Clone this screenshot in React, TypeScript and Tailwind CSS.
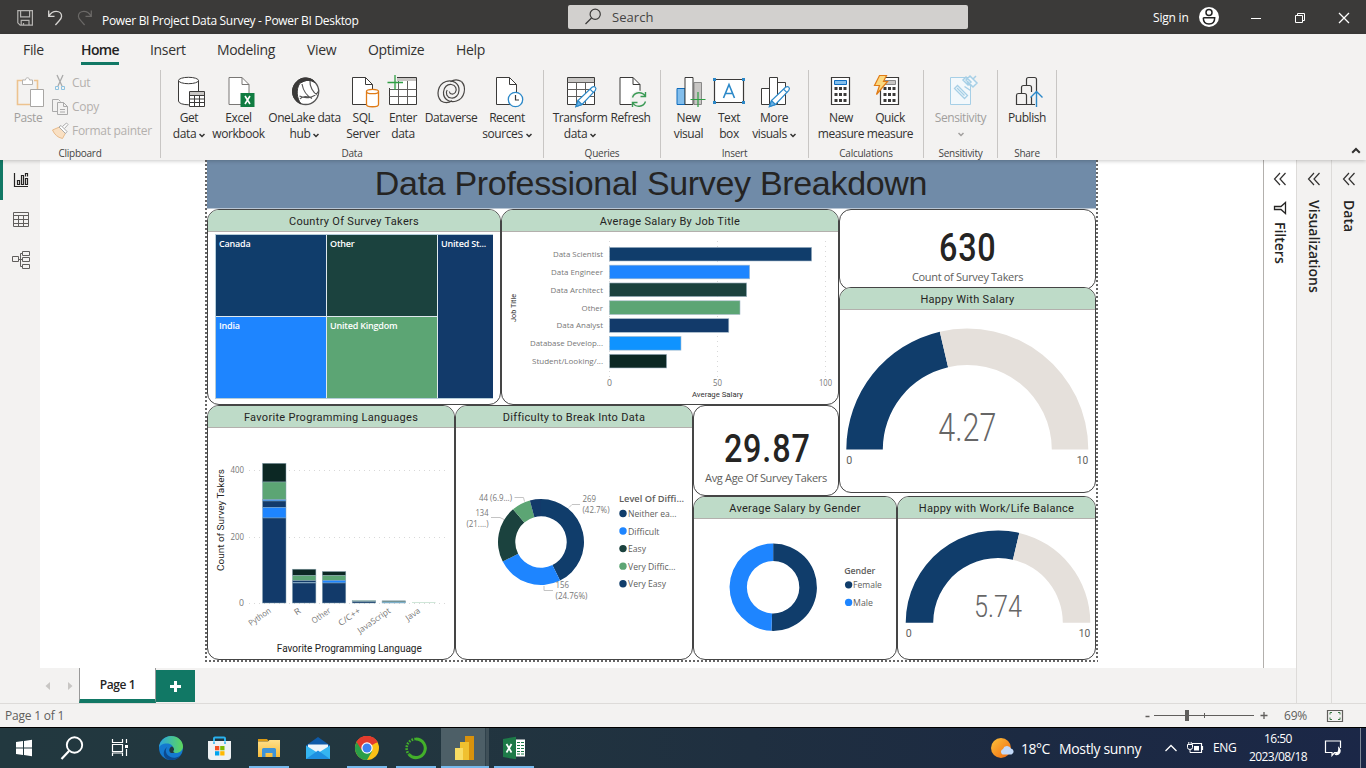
import React from "react";

const SANS = "font-['Open_Sans','Noto_Sans',sans-serif]";
const NAVY = "#103d6b";
const BLUE = "#1e85ff";
const PINE = "#1b423e";
const GREEN = "#5ca574";
const DARK = "#0c2824";

/* ---------- shared helpers ---------- */

type LabelProps = {
  x: number;
  y: number;
  size: number;
  len?: number;
  anchor?: "start" | "middle" | "end";
  fill?: string;
  weight?: number;
  family?: string;
  transform?: string;
  children: string;
};

function Label({ x, y, size, len, anchor = "start", fill = "#777", weight = 400, family = "Open Sans, Noto Sans, sans-serif", transform, children }: LabelProps) {
  return (
    <text x={x} y={y} fontSize={size} textLength={len} lengthAdjust="spacingAndGlyphs" textAnchor={anchor} fill={fill} fontWeight={weight} fontFamily={family} transform={transform}>
      {children}
    </text>
  );
}

function ring(cx: number, cy: number, R: number, r: number, from: number, to: number) {
  const p = (rad: number, deg: number) => {
    const a = ((deg - 90) * Math.PI) / 180;
    return `${(cx + rad * Math.cos(a)).toFixed(2)} ${(cy + rad * Math.sin(a)).toFixed(2)}`;
  };
  const big = to - from > 180 ? 1 : 0;
  return `M${p(R, from)}A${R} ${R} 0 ${big} 1 ${p(R, to)}L${p(r, to)}A${r} ${r} 0 ${big} 0 ${p(r, from)}Z`;
}

function Chevron({ className = "" }: { className?: string }) {
  return (
    <svg className={`inline-block ${className}`} width="6" height="5" viewBox="0 0 6 5" fill="none" stroke="currentColor" strokeWidth="1.5">
      <path d="M.5 1 3 3.5 5.5 1" />
    </svg>
  );
}

/* ---------- title bar ---------- */

function TitleBar() {
  return (
    <header className="flex h-[34px] shrink-0 items-center bg-[#3b3a39] text-white">
      <svg width="102" height="34" viewBox="0 0 102 34" fill="none">
        <g stroke="#b5b3b1" strokeWidth="1.2">
          <path d="M17.8 10.6h14.6v14.6H20.2l-2.4-2.4z" />
          <path d="M20.6 10.6v6.2h9v-6.2M21.2 25v-4.6h7.8V25M23.5 23v2" />
        </g>
        <path d="M48.7 10.5v5.8h5.8M49 16c2-3.6 4.600-4.700 7.200-4.700 3.300 0 5.400 2.300 5.400 5 0 1.900-1 3-2.400 4.400L55.400 25" stroke="#d6d4d2" strokeWidth="1.3" />
        <path d="M91.300 10.500v5.800h-5.800M91 16c-2-3.600-4.600-4.700-7.200-4.700-3.300 0-5.400 2.300-5.400 5 0 1.900 1 3 2.400 4.400l3.800 4.300" stroke="#6b6967" strokeWidth="1.2" />
      </svg>
      <span className="w-[466px] pt-[7px] text-[12px] leading-4 tracking-[-0.31px]">Power BI Project Data Survey - Power BI Desktop</span>
      <div className="flex h-6 w-[400px] items-center rounded-[2px] bg-[#d2d0ce] text-[#444]">
        <svg className="ml-4" width="18" height="18" viewBox="0 0 18 18" fill="none" stroke="#3b3a39" strokeWidth="1.2">
          <circle cx="11.200" cy="6.300" r="5.100" />
          <path d="M7.500 10 1.500 16" />
        </svg>
        <span className="ml-[10px] pt-px text-[13px] tracking-[0.05px]">Search</span>
      </div>
      <span className="ml-[185px] pt-px text-[12px] tracking-[-0.2px]">Sign in</span>
      <svg className="ml-auto" width="167" height="34" viewBox="1199 0 167 34" fill="none">
        <circle cx="1209" cy="17" r="10" fill="#fff" />
        <circle cx="1209" cy="12.600" r="3" stroke="#222" strokeWidth="1.500" />
        <path d="M1203.300 17.700h11.400c0 4-2.300 6.300-5.700 6.300s-5.700-2.300-5.700-6.300z" stroke="#222" strokeWidth="1.500" />
        <path d="M1251 18.500h10" stroke="#fff" />
        <path d="M1295.500 15.500h7v7h-7zM1297.500 15.500v-2h7v7h-2" stroke="#fff" />
        <path d="m1339 13 10 10m0-10-10 10" stroke="#fff" strokeWidth="1.300" />
      </svg>
    </header>
  );
}

/* ---------- ribbon ---------- */

function Tabs() {
  return (
    <nav className="flex h-8 pl-[23px] pt-[5px] text-[14px] leading-[22px] tracking-[-0.33px] text-[#323130]">
      <span className="w-[58px]">File</span>
      <span className="w-[69px]">
        <span className="block h-[26px] w-[38px] border-b-[3px] border-[#117865] font-semibold tracking-[-0.6px] text-[#222]">Home</span>
      </span>
      <span className="w-[67px]">Insert</span>
      <span className="w-[90px]">Modeling</span>
      <span className="w-[61px]">View</span>
      <span className="w-[88px]">Optimize</span>
      <span>Help</span>
    </nav>
  );
}

type ToolProps = { width: string; cx: number; lines: [string, string?]; menu?: boolean; muted?: boolean; children: React.ReactNode };

function Tool({ width, cx, lines, menu, muted, children }: ToolProps) {
  return (
    <div className={`flex shrink-0 flex-col items-center whitespace-nowrap text-[12px] leading-4 tracking-[-0.42px] ${width} ${muted ? "text-[#a19f9d]" : "text-[#323130]"}`}>
      <svg width="44" height="36" viewBox={`${cx - 22} 74 44 36`} fill="none" stroke="#3b3a39" strokeWidth="1">
        {children}
      </svg>
      <span>{lines[0]}</span>
      <span className="flex h-4 items-center">
        {lines[1]}
        {menu && <Chevron className={lines[1] ? "ml-[3px] mt-[2px]" : ""} />}
      </span>
    </div>
  );
}

function Group({ width, pad, name, children }: { width: string; pad: string; name: string; children: React.ReactNode }) {
  return (
    <section className={`flex h-[88px] shrink-0 flex-col border-r border-[#c8c6c4] ${width}`}>
      <div className={`flex h-[76px] shrink-0 pt-1 ${pad}`}>{children}</div>
      <div className="shrink-0 text-center text-[10px] leading-[15px] tracking-[-0.25px] text-[#444]">{name}</div>
    </section>
  );
}

function Page({ x, stroke = "#3b3a39" }: { x: number; stroke?: string }) {
  return (
    <g stroke={stroke}>
      <path d={`M${x} 77.500h13l7 7v20h-20z`} fill="#fff" />
      <path d={`M${x + 13} 77.500v7h7`} />
    </g>
  );
}

function Pencil({ x, y }: { x: number; y: number }) {
  return (
    <g transform={`translate(${x} ${y})`} stroke="#2b88c8" strokeWidth="1.200">
      <path d="m0 20 2-6L16 .8c2.500-2 5 .6 3.300 3L6 18z" fill="#fff" />
      <path d="m0 20 2-6 4 4z" fill="#6ab2e6" />
      <path d="m14 2.700 3.500 3.500" />
    </g>
  );
}

function Ribbon() {
  return (
    <div className="relative z-10 h-[126px] shrink-0 bg-[#f3f2f1] shadow-[0_1px_4px_rgba(0,0,0,.22)]">
      <Tabs />
      <div className="flex pt-1">
        <Group width="w-[161px]" pad="pl-[14px]" name="Clipboard">
          <Tool width="w-[28px]" cx={28} lines={["Paste"]} muted>
            <path d="M24 80.500h-6.500v24H30M34 80.500h3.500V89" stroke="#edc38f" strokeWidth="1.600" />
            <path d="M22.500 84.500V80h3c0-3 4-3 4 0h3v4.500z" fill="#fff" stroke="#b5b3b1" />
            <path d="M30.500 89.500h13v17h-13z" fill="#fff" stroke="#a8a6a4" />
          </Tool>
          <div className="-mt-[3px] ml-[9px] flex flex-col text-[12px] leading-6 tracking-[-0.29px] text-[#b3b0ad]">
            <div className="flex h-6 items-center">
              <svg width="18" height="18" viewBox="51 74 18 18" fill="none" stroke="#aaa">
                <path d="m57 75 5 11m1-11-5 11" strokeWidth="1.300" />
                <path d="M55.500 86.500h3v3h-3zM61.500 86.500h3v3h-3z" stroke="#8fc3e0" />
              </svg>
              <span className="ml-[3px]">Cut</span>
            </div>
            <div className="flex h-6 items-center">
              <svg width="18" height="18" viewBox="51 97 18 18" fill="none" stroke="#aaa">
                <path d="M57 110.500h-4.500v-12h6l2 2" />
                <path d="M57.500 101.500h6l4 4v8h-10zM63.500 101.500v4h4M60 108.500h5M60 111h5" />
              </svg>
              <span className="ml-[3px]">Copy</span>
            </div>
            <div className="flex h-6 items-center">
              <svg width="18" height="18" viewBox="51 121 18 18" fill="none" stroke="#aaa">
                <path d="m52.500 129 7-3 6 6-3 5.500c-5-1-8-4-10-8.500z" fill="#f9e0c3" stroke="#e8bb8b" />
                <path d="m59 126 2-1.500 6 6-1.500 2zM62.500 125.500l4-3.500 1.500 1.500-3.500 4" fill="#fff" />
              </svg>
              <span className="ml-[3px]">Format painter</span>
            </div>
          </div>
        </Group>

        <Group width="w-[383px]" pad="pl-[4px]" name="Data">
          <Tool width="w-[48px]" cx={189} lines={["Get", "data"]} menu>
            <path d="M178.500 80.500v20.500c0 5 20 5 20 0V80.500" fill="#fff" />
            <ellipse cx="188.500" cy="80.500" rx="10" ry="3.200" fill="#fff" />
            <path d="M189.500 91.500h15v15h-15z" fill="#fff" />
            <path d="M190 92h14v3h-14z" fill="#c8c6c4" stroke="none" />
            <path d="M189.500 95.500h15M189.500 99h15M189.500 102.500h15M194.500 95.500v11M199.500 95.500v11" />
          </Tool>
          <Tool width="w-[51px]" cx={238.5} lines={["Excel", "workbook"]}>
            <Page x={228.5} stroke="#797775" />
            <path d="M240 93h14v14h-14z" fill="#107c41" stroke="none" />
            <path d="m244.500 96 5 8m0-8-5 8" stroke="#fff" strokeWidth="1.600" />
          </Tool>
          <Tool width="w-[81px]" cx={304.5} lines={["OneLake data", "hub"]} menu>
            <circle cx="305.200" cy="91.500" r="13" fill="#fff" stroke="#555" strokeWidth="1.300" />
            <path d="M296 82c-5 5-5.500 13-.5 18.500 1.500 1.500 3.500 2.800 5 3.300-4.500-5.500-5-14.500-1.500-20 3.500-3.500 10.500-5 15.500-1-5-6.500-13.500-6.500-18.500-.8z" fill="#3b3a39" strokeWidth="1" />
            <path d="M301 82.500c3-4 8.500-5.500 12.500-1.500-4.500-1.500-9-.8-12.500 1.500z" fill="#3b3a39" />
            <path d="M301.500 84c1 6 5 12 10 14.500M309.500 81c-.5 5 3 12 8 14.500M299 96c4 2 14 4 19.500-5.500M299.500 99c2-2.500 6-3 9-1.500" stroke="#555" strokeWidth="1.200" />
          </Tool>
          <Tool width="w-[36px]" cx={363} lines={["SQL", "Server"]}>
            <Page x={352.5} />
            <path d="M366.500 91.500v13c0 3 12 3 12 0v-13" fill="#fff" stroke="#e07b16" strokeWidth="1.300" />
            <ellipse cx="372.500" cy="91.500" rx="6" ry="2.200" fill="#fff" stroke="#e07b16" strokeWidth="1.300" />
          </Tool>
          <Tool width="w-[44px]" cx={403} lines={["Enter", "data"]}>
            <path d="M389.500 77.500h27v27h-27z" fill="#fff" />
            <path d="M390 78h26v3h-26z" fill="#c8c6c4" stroke="none" />
            <path d="M389.500 89.500h27M389.500 96.500h27M398.500 81v23M407.500 81v23" stroke="#605e5c" />
            <path d="M386 75h11v13h-11z" fill="#f3f2f1" stroke="none" />
            <path d="M395 75v15M387.500 82.500h15.500" stroke="#2f9e44" strokeWidth="1.300" />
          </Tool>
          <Tool width="w-[52px]" cx={451} lines={["Dataverse"]}>
            <g stroke="#484644" strokeWidth="1.200">
              <path d="M461.500 81.500c5.500 6 3 17-5 19.500-7 2.300-13.500-2-13-9 .3-5 3.800-8 7.800-7.500 4.300.5 6.200 5 4 8-1.800 2.400-5.500 2-6-1" />
              <path d="M441 101c-5.500-6-3-17 5-19.500 7-2.300 13.500 2 13 9-.3 5-3.800 8-7.800 7.500-4.300-.5-6.200-5-4-8" />
              <path d="M461.500 81.500c-3.500-2-8-1.800-11 .3M441 101c3.500 2 8 1.800 11-.3" />
            </g>
          </Tool>
          <Tool width="w-[60px]" cx={507} lines={["Recent", "sources"]} menu>
            <Page x={496.5} />
            <circle cx="515.500" cy="99.500" r="7.200" fill="#fff" stroke="#2b88c8" strokeWidth="1.300" />
            <path d="M515.500 95v5h3.500" strokeWidth="1.200" />
          </Tool>
        </Group>

        <Group width="w-[117px]" pad="pl-[9px]" name="Queries">
          <Tool width="w-[54px]" cx={580} lines={["Transform", "data"]} menu>
            <path d="M567.500 77.500h27v27h-27z" fill="#fff" />
            <path d="M568 78h26v4h-26z" fill="#c8c6c4" stroke="none" />
            <path d="M567.500 82.500h27M567.500 89.500h27M567.500 96.500h27M576.500 82v22M585.500 82v22" stroke="#605e5c" />
            <Pencil x={576} y={86.5} />
          </Tool>
          <Tool width="w-[47px]" cx={630.5} lines={["Refresh"]}>
            <Page x={619.5} />
            <circle cx="638.500" cy="99.500" r="9" fill="#f3f2f1" stroke="none" />
            <path d="M632 97.500c2-6 10-6 12.500-1.500M645 92v4.500h-5M645 101.500c-2 6-10 6-12.500 1.500M632 107v-4.500h5" stroke="#3a9a55" strokeWidth="1.400" />
          </Tool>
        </Group>

        <Group width="w-[148px]" pad="pl-[8px]" name="Insert">
          <Tool width="w-[39px]" cx={688.5} lines={["New", "visual"]}>
            <path d="M693.500 82.500h7.500v22h-7.500z" fill="#c8c6c4" stroke="#888" />
            <path d="M676.500 88.500h8v16h-8z" fill="#83beec" stroke="#0f6cbd" />
            <path d="M684.500 77.500h8v27h-8z" fill="#fff" />
            <path d="M697.500 92v15M690 99.500h15" stroke="#2f9e44" strokeWidth="1.200" />
          </Tool>
          <Tool width="w-[42px]" cx={729} lines={["Text", "box"]}>
            <path d="M714.500 79.500h29v23h-29z" fill="#fff" strokeWidth="1.200" />
            <path d="m723.500 98 5.500-13.500L734.500 98M725.300 93.500h7.400" stroke="#2b88c8" strokeWidth="1.600" />
            <path d="M713 78h3v3h-3zM742 78h3v3h-3zM713 101h3v3h-3zM742 101h3v3h-3z" fill="#2b88c8" stroke="none" />
          </Tool>
          <Tool width="w-[48px]" cx={774} lines={["More", "visuals"]} menu>
            <path d="M761.500 88.500h8v16h-8zM777.500 82.500h8v22h-8zM769.500 77.500h8v27h-8z" fill="#fff" />
            <Pencil x={769.5} y={86.5} />
          </Tool>
        </Group>

        <Group width="w-[115px]" pad="pl-[7px]" name="Calculations">
          <Tool width="w-[50px]" cx={841} lines={["New", "measure"]}>
            <path d="M831.500 77.500h18v27h-18z" fill="#fff" strokeWidth="1.200" />
            <path d="M834.500 80.500h12v4h-12z" fill="#83beec" stroke="#0f6cbd" />
            <path d="M834.500 88.500h12M834.500 94.500h12M834.500 100.500h12" strokeWidth="3" strokeDasharray="3 1.500" />
          </Tool>
          <Tool width="w-[48px]" cx={890} lines={["Quick", "measure"]}>
            <path d="M880.500 77.500h18v27h-18z" fill="#fff" strokeWidth="1.200" />
            <path d="M883.500 80.500h12v4h-12z" fill="#c8c6c4" stroke="#888" />
            <path d="M883.500 88.500h12M883.500 94.500h12M883.500 100.500h12" strokeWidth="3" strokeDasharray="3 1.500" />
            <path d="M879.500 75.500h7l-3 6h4l-11 13 3-9h-5z" fill="#fbd87f" stroke="#e07b16" strokeWidth="1.200" />
          </Tool>
        </Group>

        <Group width="w-[74px]" pad="pl-[6px]" name="Sensitivity">
          <Tool width="w-[61px]" cx={960} lines={["Sensitivity"]} menu muted>
            <g stroke="#a6cfe6">
              <path d="M949.500 77.500h20v27h-20z" fill="#f3f8fb" />
              <path d="m953.500 88.500 3-3 10 10-3 3zM956 88l7.500 7.500" strokeWidth="1.300" />
              <path d="m962 80 3-3 5 5-3 3zM969 76l7 7-4 4-7-7zM966 82l4 4M963.500 86.500l6 4M972 79l3-3" fill="#f3f8fb" strokeWidth="1.500" />
            </g>
          </Tool>
        </Group>

        <Group width="w-[59px]" pad="pl-[7px]" name="Share">
          <Tool width="w-[44px]" cx={1027} lines={["Publish"]}>
            <path d="M1026.500 85.500v-6q0-2 2-2h6q2 0 2 2v12M1021.500 93v-5.500q0-2 2-2h6q2 0 2 2V92M1031.500 97v7.500h3.500" strokeWidth="1.200" />
            <path d="M1016.500 104.500v-9q0-2 2-2h6q2 0 2 2v9zM1026.500 104.500h5" strokeWidth="1.200" />
            <path d="M1036.500 107V91.500m-6 6 6-6 6 6" stroke="#2b88c8" strokeWidth="1.400" />
          </Tool>
        </Group>

        <svg className="ml-auto mr-[5px] mt-[76px]" width="10" height="9" viewBox="0 0 10 9" fill="none" stroke="#323130" strokeWidth="2">
          <path d="m1.200 6.800 3.800-3.800 3.800 3.800" />
        </svg>
      </div>
    </div>
  );
}

/* ---------- report ---------- */

function Card({ place, title, children }: { place: string; title?: string; children: React.ReactNode }) {
  return (
    <article className={`flex flex-col overflow-hidden rounded-[12px] border border-[#454545] bg-white ${place}`}>
      {title && (
        <h2 className="h-[22px] shrink-0 border-b border-[#b3b0ad] bg-[#bedbc8] text-center font-[Roboto,sans-serif] text-[11px] leading-[23px] tracking-[0.3px] text-[#252423]">{title}</h2>
      )}
      {children}
    </article>
  );
}

function TreeMap() {
  return (
    <div className="mx-[7px] mt-[2px] grid h-[165px] grid-cols-[110px_110px_55px] grid-rows-[81px_81px] gap-px border border-[#b5cdd9] bg-[#dfe9ee] text-[9px] font-semibold leading-[18px] tracking-[-0.2px] text-white [&>div]:pl-[3px]">
      <div className="bg-[#103d6b]">Canada</div>
      <div className="bg-[#1b423e]">Other</div>
      <div className="row-span-2 bg-[#123a6a]">United St...</div>
      <div className="bg-[#1e85ff]">India</div>
      <div className="bg-[#5ca574]">United Kingdom</div>
    </div>
  );
}

const jobs: [string, number, number, string][] = [
  ["Data Scientist", 811.7, 50, NAVY],
  ["Data Engineer", 749.7, 52, BLUE],
  ["Data Architect", 746.7, 52.5, PINE],
  ["Other", 740, 21.5, GREEN],
  ["Data Analyst", 728.8, 46.500, "#123a6a"],
  ["Database Develop...", 681, 73, "#0f93ff"],
  ["Student/Looking/...", 666.7, 71, DARK],
];

function JobChart() {
  return (
    <svg width="336" height="172" viewBox="502 232 336 172">
      {[609.5, 717.5, 825.5].map((x) => (
        <path key={x} d={`M${x} 241v136`} stroke="#d8d8d8" strokeDasharray="1 4" />
      ))}
      {jobs.map(([name, end, len, color], i) => (
        <g key={name}>
          <rect x="609.500" y={247.3 + i * 17.83} width={end - 609.5} height="13.700" fill={color} stroke="#a9bccb" strokeWidth=".6" />
          <Label x={603} y={257.2 + i * 17.8} size={8} len={len} anchor="end">{name}</Label>
        </g>
      ))}
      <Label x={609.500} y={386} size={8.500} len={5} anchor="middle">0</Label>
      <Label x={717.500} y={386} size={8.500} len={9} anchor="middle">50</Label>
      <Label x={825.500} y={386} size={8.500} len={13} anchor="middle">100</Label>
      <Label x={717.500} y={397} size={7} len={51} anchor="middle" fill="#333" family="Roboto, sans-serif">Average Salary</Label>
      <Label x={0} y={0} size={7} len={28} anchor="middle" fill="#333" family="Roboto, sans-serif" transform="translate(516 308) rotate(-90)">Job Title</Label>
    </svg>
  );
}

const stacks: { name: string; x: number; len: number; parts: [number, number, string][] }[] = [
  { name: "Python", x: 262.5, len: 25, parts: [[463.3, 482, DARK], [482, 499.700, GREEN], [499.700, 501, BLUE], [501, 507.300, "#123a6a"], [507.300, 518, BLUE], [518, 603, "#123a6a"]] },
  { name: "R", x: 292.4, len: 6, parts: [[569.200, 575.500, DARK], [575.500, 580.700, GREEN], [580.700, 582.300, "#123a6a"], [582.300, 583, BLUE], [583, 603, "#123a6a"]] },
  { name: "Other", x: 322.3, len: 21, parts: [[571.500, 575.500, DARK], [575.500, 580.300, GREEN], [580.300, 583, BLUE], [583, 603, "#123a6a"]] },
  { name: "C/C++", x: 352.2, len: 25, parts: [[600.600, 601.600, GREEN], [601.600, 603, "#123a6a"]] },
  { name: "JavaScript", x: 382.1, len: 38, parts: [[600.800, 602, "#5f8278"], [602, 603, "#6fbbe6"]] },
  { name: "Java", x: 412, len: 16, parts: [] },
];

function LanguageChart() {
  return (
    <svg width="246" height="231" viewBox="208 428 246 231">
      {[470.500, 537.500, 603.500].map((y) => (
        <path key={y} d={`M249 ${y}h199`} stroke="#d8d8d8" strokeDasharray="1 4" />
      ))}
      <Label x={244} y={473.300} size={8.500} len={13.500} anchor="end">400</Label>
      <Label x={244} y={540} size={8.500} len={13.500} anchor="end">200</Label>
      <Label x={244} y={606} size={8.500} len={5} anchor="end">0</Label>
      {stacks.map((s) => (
        <g key={s.name}>
          {s.parts.map(([a, b, c]) => (
            <rect key={a} x={s.x} y={a} width="23.500" height={b - a} fill={c} stroke="#8ca6b4" strokeWidth=".5" />
          ))}
          <Label x={0} y={0} size={8.300} len={s.len} anchor="end" transform={`translate(${s.x + 9} 612) rotate(-35)`}>{s.name}</Label>
        </g>
      ))}
      <path d="M412 602.500h23.500" stroke="#cfe6d8" />
      <Label x={349.300} y={652} size={10} len={145} anchor="middle" fill="#252423" family="Roboto, sans-serif">Favorite Programming Language</Label>
      <Label x={0} y={0} size={9.500} len={102} anchor="middle" fill="#252423" family="Roboto, sans-serif" transform="translate(224 520) rotate(-90)">Count of Survey Takers</Label>
    </svg>
  );
}

const levels: [string, string, number][] = [
  ["Neither ea...", NAVY, 48.500],
  ["Difficult", BLUE, 31.500],
  ["Easy", PINE, 18],
  ["Very Diffic...", GREEN, 47.500],
  ["Very Easy", NAVY, 38],
];

function DifficultyChart() {
  const arc = (a: number, b: number) => ring(541, 542, 43, 25.7, a, b);
  return (
    <svg width="236" height="231" viewBox="456 428 236 231">
      <path d={arc(0, 153.7)} fill={NAVY} />
      <path d={arc(153.7, 242.9)} fill={BLUE} />
      <path d={arc(242.9, 319.4)} fill={PINE} />
      <path d={arc(319.4, 345)} fill={GREEN} />
      <path d={arc(345, 360)} fill="#123a6a" />
      <path d="M514.500 497.500h9l1 4M491 517.500h9l4 2M569 507.500l3-3h8M544 586v4.500h9" fill="none" stroke="#c4c4c4" />
      <Label x={479} y={501} size={8.500} len={33}>44 (6.9...)</Label>
      <Label x={488.500} y={516} size={8.500} len={13} anchor="end">134</Label>
      <Label x={466.500} y={527} size={8.500} len={22}>(21....)</Label>
      <Label x={582.500} y={502} size={8.500} len={13.500}>269</Label>
      <Label x={582.500} y={513} size={8.500} len={27}>(42.7%)</Label>
      <Label x={555.500} y={588} size={8.500} len={13.500}>156</Label>
      <Label x={555.500} y={599} size={8.500} len={32}>(24.76%)</Label>
      <Label x={619} y={502} size={9.500} len={65} fill="#605e5c" weight={600}>Level Of Diffi...</Label>
      {levels.map(([name, color, len], i) => (
        <g key={name}>
          <circle cx="623" cy={513.500 + i * 17.550} r="3.700" fill={color} />
          <Label x={628} y={517 + i * 17.550} size={9.500} len={len} fill="#605e5c">{name}</Label>
        </g>
      ))}
    </svg>
  );
}

function GenderChart() {
  return (
    <svg width="202" height="141" viewBox="694 519 202 141">
      <path d={ring(773, 587.7, 44, 26.4, 0, 182.300)} fill={NAVY} />
      <path d={ring(773, 587.7, 44, 26.4, 182.300, 360)} fill={BLUE} />
      <Label x={844.500} y={574} size={9.500} len={31.500} fill="#605e5c" weight={600}>Gender</Label>
      <circle cx="849" cy="585.300" r="3.700" fill={NAVY} />
      <Label x={853.500} y={588.700} size={9.500} len={29} fill="#605e5c">Female</Label>
      <circle cx="849" cy="603" r="3.700" fill={BLUE} />
      <Label x={853.500} y={606.400} size={9.500} len={20} fill="#605e5c">Male</Label>
    </svg>
  );
}

type GaugeProps = { w: number; h: number; x: number; y: number; cx: number; cy: number; R: number; r: number; value: number; size: number; len: number; textY: number };

function Gauge({ w, h, x, y, cx, cy, R, r, value, size, len, textY }: GaugeProps) {
  const split = -90 + value * 18;
  return (
    <svg width={w} height={h} viewBox={`${x} ${y} ${w} ${h}`}>
      <path d={ring(cx, cy, R, r, -90, split)} fill={NAVY} />
      <path d={ring(cx, cy, R, r, split, 90)} fill="#e5e0db" />
      <Label x={cx} y={textY} size={size} len={len} anchor="middle" fill="#666" weight={300} family="Roboto, sans-serif">{value.toFixed(2)}</Label>
      <Label x={cx - R} y={cy + 14.300} size={11} len={6} fill="#605e5c" family="Roboto, sans-serif">0</Label>
      <Label x={cx + R} y={cy + 14.300} size={11} len={11.500} anchor="end" fill="#605e5c" family="Roboto, sans-serif">10</Label>
    </svg>
  );
}

function Kpi({ value, caption, pad, shift }: { value: string; caption: string; pad: string; shift: string }) {
  return (
    <div className={`flex flex-col items-center ${pad}`}>
      <span className={`scale-x-[.83] whitespace-nowrap font-[Roboto,sans-serif] text-[39px] font-medium leading-[42px] tracking-[1px] text-[#252423] ${shift}`}>{value}</span>
      <span className="whitespace-nowrap text-[11px] leading-4 tracking-[-0.32px] text-[#605e5c]">{caption}</span>
    </div>
  );
}

function Report() {
  const v = "w-[2px] bg-[repeating-linear-gradient(180deg,#666_0_2px,#fff_2px_4px)]";
  return (
    <div className="ml-[165px] w-[893px]">
      <div className="flex h-[500px]">
        <div className={v} />
        <div className="w-[889px]">
          <h1 className="h-[49px] border-b border-[#b9c6d4] bg-[#708ba8] pr-px text-center font-['Liberation_Sans',sans-serif] text-[34px] leading-[46px] tracking-[-0.32px] text-[#252423]">
            Data Professional Survey Breakdown
          </h1>
          <div className="grid grid-cols-[248px_46px_192px_146px_58px_199px] grid-rows-[78px_118px_91px_164px]">
            <Card place="col-span-2 row-span-2" title="Country Of Survey Takers"><TreeMap /></Card>
            <Card place="col-span-2 row-span-2" title="Average Salary By Job Title"><JobChart /></Card>
            <Card place="col-span-2 -mb-[3px]"><Kpi value="630" caption="Count of Survey Takers" pad="pt-[17px]" shift="" /></Card>
            <Card place="z-[1] col-start-5 col-span-2 row-start-2 row-span-2 mb-[3px]" title="Happy With Salary">
              <Gauge w={255} h={180} x={840} y={310} cx={967.3} cy={449.5} R={121} r={84.5} value={4.27} size={38.500} len={58} textY={441} />
            </Card>
            <Card place="row-start-3 row-span-2" title="Favorite Programming Languages"><LanguageChart /></Card>
            <Card place="col-start-2 col-span-2 row-start-3 row-span-2" title="Difficulty to Break Into Data"><DifficultyChart /></Card>
            <Card place="col-start-4 row-start-3"><Kpi value="29.87" caption="Avg Age Of Survey Takers" pad="pt-[22px]" shift="translate-x-px" /></Card>
            <Card place="col-start-4 col-span-2 row-start-4" title="Average Salary by Gender"><GenderChart /></Card>
            <Card place="col-start-6 row-start-4" title="Happy with Work/Life Balance">
              <Gauge w={197} h={140} x={898} y={519} cx={998} cy={622.700} R={92.3} r={64.8} value={5.74} size={31.500} len={48} textY={617} />
            </Card>
          </div>
        </div>
        <div className={v} />
      </div>
      <div className="h-[2px] bg-[repeating-linear-gradient(90deg,#666_0_2px,#fff_2px_4px)]" />
    </div>
  );
}

/* ---------- side rails ---------- */

function ViewRail() {
  return (
    <aside className="flex w-10 shrink-0 flex-col bg-[#f3f2f1]">
      <div className="h-10 border-l-[3px] border-[#117865]">
        <svg width="37" height="40" viewBox="3 160 37 40" fill="none" stroke="#252423" strokeWidth="1.200">
          <path d="M14.500 173v13.500H28" />
          <path d="M17.500 180.500h2v4h-2zM21.500 175.500h2v9h-2zM25.500 178.500h2v6h-2z" />
          <path d="M25.500 176.500v-3h2v3" />
        </svg>
      </div>
      <svg width="40" height="80" viewBox="0 200 40 80" fill="none" stroke="#605e5c">
        <path d="M13.500 212.500h15v14h-15zM13.500 215.500h15M13.500 219.500h15M13.500 223.500h15M18.500 215.500v11M23.500 215.500v11" />
        <path d="M12.500 256.500h6v5h-6zM22.500 251.500h7v4h-7zM22.500 257.500h7v4h-7zM22.500 264.500h7v4h-7zM18.500 259.500h4M20.500 253.500v13M20.500 253.500h2M20.500 266.500h2" />
      </svg>
    </aside>
  );
}

function Collapse() {
  return (
    <svg className="mt-[12px] shrink-0" width="14" height="14" viewBox="0 0 14 14" fill="none" stroke="#323130" strokeWidth="1.200">
      <path d="M7 1 1.500 7 7 13M12.500 1 7 7l5.500 6" />
    </svg>
  );
}

function Pane({ name, className, children }: { name: string; className: string; children?: React.ReactNode }) {
  return (
    <aside className={`flex shrink-0 flex-col items-center ${className}`}>
      <Collapse />
      {children}
      <span className="pr-px text-[14px] font-semibold leading-[18px] text-[#252423] [writing-mode:vertical-rl]">{name}</span>
    </aside>
  );
}

/* ---------- bottom bars ---------- */

function PageTabs() {
  return (
    <div className="flex h-[35px] bg-[#f3f2f1]">
      <svg width="39" height="35" viewBox="40 668 39 35" fill="#c8c6c4">
        <path d="M50 682v8l-4.500-4zM68 682v8l4.500-4z" />
      </svg>
      <div className="flex h-[35px] w-[77px] items-center justify-center border-b-4 border-l border-r border-b-[#117865] border-l-[#999] border-r-[#999] bg-white pt-[3px] text-[12px] font-semibold tracking-[-0.4px] text-[#252423]">Page 1</div>
      <div className="mt-[2px] flex h-8 w-[39px] items-center justify-center bg-[#117865]">
        <svg width="11" height="11" viewBox="0 0 11 11" stroke="#fff" strokeWidth="3"><path d="M5.500 0v11M0 5.500h11" /></svg>
      </div>
    </div>
  );
}

function StatusBar() {
  return (
    <footer className="flex h-6 shrink-0 items-center justify-between border-t border-[#dddbd9] bg-[#f3f2f1] pl-[5px] text-[12px] tracking-[-0.2px] text-[#605e5c]">
      <span>Page 1 of 1</span>
      <div className="flex items-center">
        <svg width="125" height="20" viewBox="1144 706 125 20" stroke="#605e5c" fill="none">
          <path d="M1145.500 716.500h4" strokeWidth="1.500" />
          <path d="M1154 715.500h100M1204.500 713v5" />
          <path d="M1187 710v11" strokeWidth="4" />
          <path d="M1260.500 715.500h7M1264 712v7" strokeWidth="1.300" />
        </svg>
        <span className="ml-[15px] w-[42px]">69%</span>
        <svg className="mr-[22px]" width="18" height="14" viewBox="0 0 18 14" fill="none" stroke="#605e5c">
          <path d="M1.500 1.500h15v11h-15z" strokeWidth="1.200" />
          <path d="M4 5.500v-2h2M12 3.500h2v2M4 8.500v2h2M12 10.500h2v-2" stroke="#3a7a45" />
        </svg>
      </div>
    </footer>
  );
}

function Taskbar() {
  return (
    <footer className="flex h-[41px] shrink-0 items-center border-t border-black bg-[linear-gradient(90deg,#22383f_0%,#22363f_30%,#1f2f40_55%,#1c2a42_75%,#1b2747_100%)] text-white">
      <svg className="shrink-0" width="540" height="40" viewBox="0 728 540 40" fill="none">
        <defs>
          <linearGradient id="edge" x1="0" y1="0" x2="1" y2="0"><stop offset="0" stopColor="#2aa5e0" /><stop offset="1" stopColor="#5ed85a" /></linearGradient>
          <linearGradient id="folder" x1="0" y1="0" x2="0" y2="1"><stop offset="0" stopColor="#ffe08a" /><stop offset="1" stopColor="#f7bc3b" /></linearGradient>
        </defs>
        <path d="m16 742 7-1v6.500h-7zM24 740.900l8-1.100v7.700h-8zM16 748.500h7v6.500l-7-1zM24 748.500h8v7.700l-8-1.100z" fill="#fff" />
        <circle cx="74.500" cy="745" r="7.700" stroke="#fff" strokeWidth="1.900" />
        <path d="m69 751-7.500 8" stroke="#fff" strokeWidth="2.200" />
        <g stroke="#fff" strokeWidth="1.200">
          <path d="M112.500 739v3.500h10V739M112.500 744.500h10v7h-10zM112.500 756v-3h10v3M126.500 739v4M126.500 749v7" />
          <path d="M125 745h3v3h-3z" fill="#fff" stroke="none" />
        </g>
        <g>
          <circle cx="171" cy="748" r="12" fill="#1479cf" />
          <path d="M159 748c0-7 6-12 12-12 7 0 12 5 12 10.500 0 4-3.500 6.500-7 6.500-4 0-4-1.500-3-3 1-4-2-6.500-6-6.500-4.500 0-7.500 2-8 4.500z" fill="url(#edge)" />
          <path d="M167 747c-4 6 3 12 9 10.500 2.500-.5 4.500-2 5.500-3.500-2 4-6 6-10.500 6-7 0-10-8-4-13z" fill="#0c4a8f" />
          <path d="M174 750c-1.200 1.600-.8 3 2 3h-5c-3-2-1.500-6 1-6.500 1.500.5 2.300 2 2 3.500z" fill="#22383f" />
        </g>
        <g>
          <path d="M214 742v-3.500q0-1 1-1h9q1 0 1 1v3.500" stroke="#29b1ee" strokeWidth="2" />
          <path d="M208 741h23v16q0 3-3 3h-17q-3 0-3-3z" fill="#eef1f3" />
          <path d="M214 741.500v2.500M225 741.500v2.500" stroke="#29b1ee" strokeWidth="1.500" />
          <path d="M215 746h4.300v4.300H215z" fill="#f25022" /><path d="M220.200 746h4.300v4.300h-4.300z" fill="#7fba00" />
          <path d="M215 751.200h4.300v4.300H215z" fill="#00a4ef" /><path d="M220.200 751.200h4.300v4.300h-4.300z" fill="#ffb900" />
        </g>
        <g>
          <path d="M258 739h9l2 2.500h-11z" fill="#dd9b12" />
          <path d="M258 741.500h10l1.500-1.500H280v17h-22z" fill="url(#folder)" />
          <path d="M262 757v-7.500q0-1.500 1.500-1.500h11q1.500 0 1.500 1.500v7.500h-3.500v-4h-7v4z" fill="#3d93d8" />
        </g>
        <g>
          <path d="m306 745.500 12-8.500 12 8.500v3h-24z" fill="#0e5aa8" />
          <path d="M308 744.500h20v8h-20z" fill="#eef5fa" />
          <path d="M306 745.500 318 753l12-7.500V759h-24z" fill="#35b5f1" />
          <path d="m306 759 12-8.500L330 759z" fill="#1e8fe0" />
        </g>
        <g>
          <circle cx="367" cy="748" r="12" fill="#fbc116" />
          <path d="M367 748 356.600 742A12 12 0 0 1 377.400 742z" fill="#e33b2e" />
          <path d="M356.600 742A12 12 0 0 0 367 760l5.200-9-5.200-3z" fill="#2a9e48" />
          <path d="M367 742.500h10.600A12 12 0 0 0 356.600 742l5 8z" fill="#e33b2e" />
          <circle cx="367" cy="748" r="5.700" fill="#fff" /><circle cx="367" cy="748" r="4.500" fill="#3e82f1" />
        </g>
        <path d="M416 739a9.300 9.300 0 1 1-7 15.500" stroke="#43b02a" strokeWidth="3" />
        <path d="M416 739a9.300 9.300 0 0 0-7 15.500" stroke="#43b02a" strokeWidth="2.600" strokeDasharray="1.700 1.200" />
        <path d="M441 728h44v40h-44z" fill="#4d5f67" /><path d="M485.500 728h3.500v40h-3.500z" fill="#3f5058" />
        <path d="M465 736h9v24h-9z" fill="#d9920c" /><path d="M460 742h9v18h-9z" fill="#f0c02f" /><path d="M455 748h8v12h-8z" fill="#f8dc63" />
        <g>
          <path d="M513 739.500h12v17h-12z" fill="#fff" />
          <path d="M517 742.500h3M521 742.500h3M517 745.500h3M521 745.500h3M517 748.500h3M521 748.500h3M517 751.500h3M521 751.500h3M517 754h3M521 754h3" stroke="#1d7a48" />
          <path d="m503 739 13-2.300v22.600L503 757z" fill="#1d7a48" />
          <path d="m506.500 744 5 8.500m0-8.500-5 8.500" stroke="#fff" strokeWidth="1.700" />
        </g>
        <path d="M249 766h40v2h-40zM347 766h40v2h-40zM396 766h40v2h-40zM441 766h48v2h-48zM494 766h40v2h-40z" fill="#76b9ed" />
      </svg>
      <svg className="ml-[450px] shrink-0" width="24" height="24" viewBox="990 736 24 24">
        <defs><linearGradient id="sun" x1="0" y1="0" x2="1" y2="1"><stop offset="0" stopColor="#fcc33c" /><stop offset="1" stopColor="#f0660e" /></linearGradient></defs>
        <circle cx="1001" cy="748" r="10" fill="url(#sun)" />
        <path d="M1002.500 754.500a3 3 0 0 1 .5-5.500 4.300 4.300 0 0 1 8-.5 3.100 3.100 0 0 1 .5 6z" fill="#c3d9f8" />
      </svg>
      <span className="ml-[7px] w-[38px] shrink-0 whitespace-nowrap text-[14px] tracking-[-0.5px]">18°C</span>
      <span className="w-[103px] shrink-0 whitespace-nowrap text-[14px] tracking-[-0.35px]">Mostly sunny</span>
      <svg className="shrink-0" width="42" height="20" viewBox="1162 738 42 20" fill="none" stroke="#fff">
        <path d="m1165.500 751 5.500-5.500 5.500 5.500" strokeWidth="1.300" />
        <path d="M1192 743.500h9.500v9H1191M1202.500 746v4" strokeWidth="1.200" />
        <path d="M1194 746h5v4.500h-5z" fill="#fff" stroke="none" />
        <path d="M1187.500 744.500h5v3q0 2-2.500 2t-2.500-2zM1188.800 742v2.500M1191.200 742v2.500M1190 749.500v3h3" />
      </svg>
      <span className="ml-[9px] w-[36px] shrink-0 text-[12px] tracking-[-0.4px]">ENG</span>
      <div className="flex w-[58px] shrink-0 flex-col items-center whitespace-nowrap text-[12px] leading-[18px] tracking-[-0.55px]">
        <span>16:50</span>
        <span>2023/08/18</span>
      </div>
      <svg className="ml-[17px] shrink-0" width="18" height="18" viewBox="0 0 18 18" fill="none" stroke="#fff" strokeWidth="1.200">
        <path d="M13 13.500h-2.500L8 16.500v-3H1.500V2h15v7" />
        <path d="M14.800 9c1.500 1.500 2.200 4-.3 6-1.200 1-2.900.8-3.500 0 2.200 0 4.300-2.500 3.800-6z" fill="#fff" />
      </svg>
      <span className="ml-[18px] h-10 w-px bg-[#7d8796]" />
    </footer>
  );
}

export default function App() {
  return (
    <div className={`flex h-[768px] w-[1366px] flex-col overflow-hidden bg-white ${SANS}`}>
      <TitleBar />
      <Ribbon />
      <main className="flex h-[543px] shrink-0">
        <ViewRail />
        <div className="flex w-[1256px] shrink-0 flex-col">
          <div className="flex h-[508px] justify-between">
            <Report />
            <Pane name="Filters" className="w-[33px] border-l border-[#b3b0ad] bg-white">
              <svg className="mb-[7px] mt-[15px] shrink-0" width="14" height="14" viewBox="0 0 14 14" fill="none" stroke="#252423" strokeWidth="1.300">
                <path d="M12.500 1.500v11L8 8.500H1.500v-3H8z" />
              </svg>
            </Pane>
          </div>
          <PageTabs />
        </div>
        <Pane name="Visualizations" className="w-[35px] gap-[14px] border-l border-[#dddbd9] bg-[#f3f2f1]" />
        <Pane name="Data" className="w-[35px] gap-[14px] border-l border-[#dddbd9] bg-[#f3f2f1]" />
      </main>
      <StatusBar />
      <Taskbar />
    </div>
  );
}
